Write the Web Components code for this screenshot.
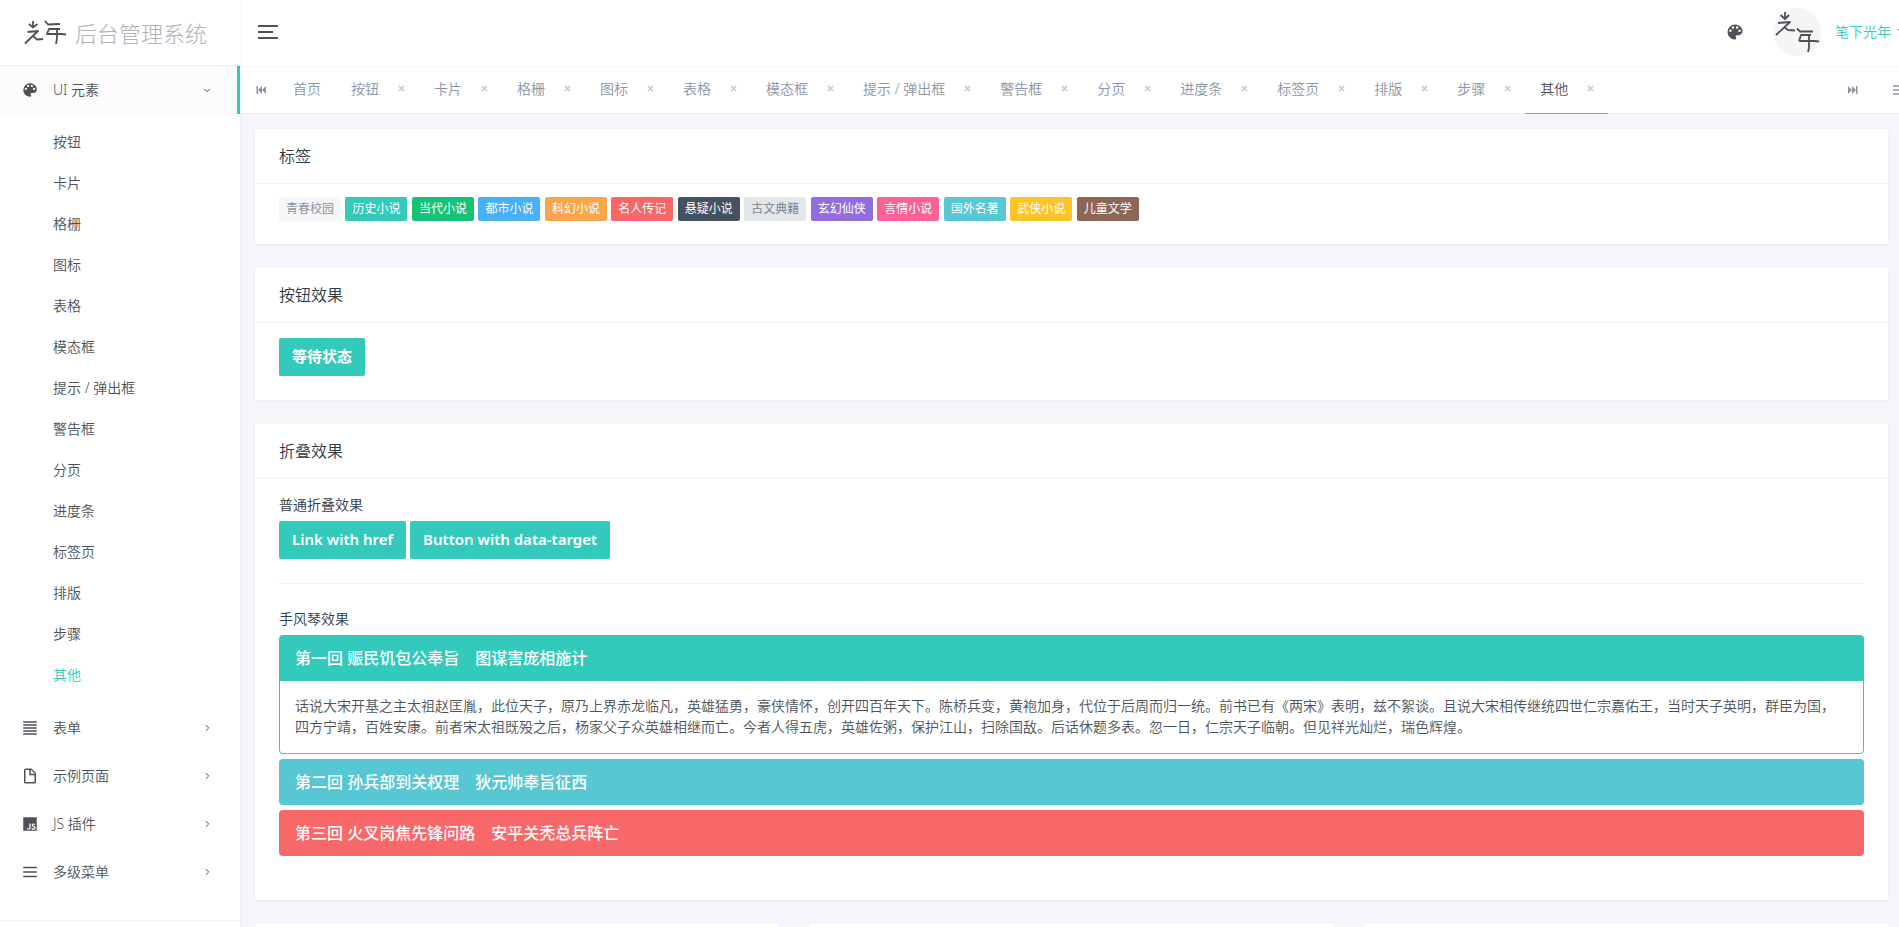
<!DOCTYPE html>
<html lang="zh-CN">
<head>
<meta charset="utf-8">
<title>光年后台管理系统 - 其他</title>
<style>
  html, body { margin: 0; height: 100%; }
  body {
    --primary: #33cabb;
    --text: #4d5259;
    --heading: #313944;
    --line: #f1f2f3;
    background: #f5f6fa;
    color: var(--text);
    font: 350 14px/21px "Noto Sans", "Noto Sans CJK SC", sans-serif;
    overflow: hidden;
  }
</style>
</head>
<body>
<lyear-app></lyear-app>

<script>
const define = (name, html, setup) => {
  const tpl = document.createElement('template');
  tpl.innerHTML = html;
  customElements.define(name, class extends HTMLElement {
    constructor() {
      super();
      this.attachShadow({ mode: 'open' }).append(tpl.content.cloneNode(true));
    }
    connectedCallback() { if (setup) setup(this, this.shadowRoot); }
  });
};

const ICONS = {
  palette: '<path fill="currentColor" d="M17.5 12a1.5 1.5 0 0 1-1.5-1.5A1.5 1.5 0 0 1 17.5 9a1.5 1.5 0 0 1 1.5 1.5 1.5 1.5 0 0 1-1.5 1.5m-3-4A1.5 1.5 0 0 1 13 6.5 1.5 1.5 0 0 1 14.5 5 1.5 1.5 0 0 1 16 6.5 1.5 1.5 0 0 1 14.5 8m-5 0A1.5 1.5 0 0 1 8 6.5 1.5 1.5 0 0 1 9.500 5 1.5 1.5 0 0 1 11 6.5 1.5 1.5 0 0 1 9.5 8m-3 4A1.5 1.5 0 0 1 5 10.5 1.5 1.5 0 0 1 6.5 9 1.5 1.5 0 0 1 8 10.5 1.5 1.5 0 0 1 6.5 12M12 3a9 9 0 0 0-9 9 9 9 0 0 0 9 9 1.5 1.5 0 0 0 1.5-1.5c0-.39-.15-.74-.39-1-.23-.27-.38-.62-.38-1a1.5 1.5 0 0 1 1.5-1.5H16a5 5 0 0 0 5-5c0-4.42-4.03-8-9-8z"/>',
  lines: '<path fill="currentColor" d="M3 3h18v2H3zm0 4h18v2H3zm0 4h18v2H3zm0 4h18v2H3zm0 4h18v2H3z"/>',
  file: '<path fill="currentColor" d="M13 9h5.5L13 3.500V9M6 2h8l6 6v12a2 2 0 0 1-2 2H6a2 2 0 0 1-2-2V4a2 2 0 0 1 2-2m5 2H6v16h12v-9h-7V4z"/>',
  js: '<path fill="currentColor" fill-rule="evenodd" d="M3 3h18v18H3V3m4.730 15.040c.4.850 1.190 1.550 2.540 1.550 1.500 0 2.530-.8 2.530-2.550v-5.780h-1.700V17c0 .860-.35 1.080-.9 1.080-.58 0-.82-.4-1.090-.87l-1.380.83m5.980-.18c.5.980 1.510 1.730 3.090 1.730 1.600 0 2.800-.83 2.800-2.360 0-1.410-.81-2.040-2.250-2.660l-.42-.18c-.73-.31-1.040-.52-1.040-1.020 0-.41.310-.73.810-.73.480 0 .8.210 1.090.73l1.310-.87c-.55-.96-1.330-1.330-2.400-1.330-1.510 0-2.480.960-2.480 2.230 0 1.380.81 2.030 2.030 2.550l.42.18c.78.340 1.240.55 1.240 1.130 0 .48-.45.83-1.150.83-.83 0-1.310-.43-1.670-1.030l-1.380.8z"/>',
  menu: '<path fill="currentColor" d="M3 5h18v2H3zm0 6h18v2H3zm0 6h18v2H3z"/>',
  right: '<path fill="none" stroke="currentColor" stroke-width="1.7" d="M10 7l5 5-5 5"/>',
  down: '<path fill="none" stroke="currentColor" stroke-width="1.7" d="M7 10l5 5 5-5"/>',
  first: '<path fill="currentColor" d="M3 4h3v16H3zM14 4v16l-8-8zM22 4v16l-8-8z"/>',
  last: '<path fill="currentColor" d="M18 4h3v16h-3zM10 4v16l8-8zM2 4v16l8-8z"/>',
  close: '<path fill="none" stroke="currentColor" stroke-width="3" d="M5 5l14 14M19 5L5 19"/>'
};

define('ly-icon', `
  <style>
    :host { display: inline-flex; flex: none; width: 18px; height: 18px; }
    svg { width: 100%; height: 100%; }
  </style>
  <svg viewBox="0 0 24 24" aria-hidden="true"></svg>`,
  (el, root) => { root.querySelector('svg').innerHTML = ICONS[el.getAttribute('name')]; });

define('ly-logo', `
  <style>
    :host { display: flex; align-items: center; height: 66px; padding-left: 23px; border-bottom: 1px solid #e9eaec; box-sizing: border-box; }
    a { display: flex; align-items: center; gap: 8px; color: #b0b2b4; text-decoration: none; font-size: 22px; line-height: 32px; font-weight: 300; }
    svg { width: 44px; height: 26px; color: #4d5259; }
  </style>
  <a href="#home">
    <svg viewBox="0 0 44 26" fill="none" stroke="currentColor" stroke-width="1.8" stroke-linejoin="round" aria-hidden="true">
      <path d="M10 1v6M6 4l4 3.500L14.500 4M4.500 12L15 11 2 23.500M10.500 16.500l3.500 3 6-.5"/>
      <path d="M22 1l3 3.500 12-.5M37 9H26l-2 5h15l4 .5M34 9v9l-1 6"/>
    </svg>
    <span>后台管理系统</span>
  </a>`);

define('ly-nav-item', `
  <style>
    :host { display: block; }
    a { display: flex; align-items: center; height: 48px; padding: 0 26px 0 21px; color: var(--text); text-decoration: none; box-sizing: border-box; }
    span { flex: 1; margin-left: 14px; padding-bottom: 2px; }
    .arrow { width: 14px; height: 14px; }
    :host([open]) a { background: #fcfcfc; border-right: 3px solid var(--primary); padding-right: 23px; }
  </style>
  <a href="#menu"><span><slot></slot></span></a>`,
  (el, root) => {
    const link = root.querySelector('a');
    link.insertAdjacentHTML('afterbegin', `<ly-icon name="${el.getAttribute('icon')}"></ly-icon>`);
    link.insertAdjacentHTML('beforeend', `<ly-icon class="arrow" name="${el.hasAttribute('open') ? 'down' : 'right'}"></ly-icon>`);
  });

define('ly-sub-item', `
  <style>
    :host { display: block; }
    a { display: block; padding: 9px 24px 11px 53px; color: var(--text); text-decoration: none; }
    :host([active]) a { color: var(--primary); }
  </style>
  <a href="#page"><slot></slot></a>`);

define('ly-sidebar', `
  <style>
    :host { display: flex; flex-direction: column; flex: none; width: 240px; background: #fff; box-shadow: 0 0 4px rgba(0,0,0,.08); z-index: 1; }
    .sub { padding: 8px 0; }
    .sub ly-sub-item { height: 41px; }
    .foot { margin-top: 24px; border-top: 1px solid var(--line); }
  </style>
  <ly-logo></ly-logo>
  <nav>
    <ly-nav-item icon="palette" open>UI 元素</ly-nav-item>
    <div class="sub"></div>
    <ly-nav-item icon="lines">表单</ly-nav-item>
    <ly-nav-item icon="file">示例页面</ly-nav-item>
    <ly-nav-item icon="js">JS 插件</ly-nav-item>
    <ly-nav-item icon="menu">多级菜单</ly-nav-item>
  </nav>
  <div class="foot"></div>`,
  (el, root) => {
    const pages = ['按钮','卡片','格栅','图标','表格','模态框','提示 / 弹出框','警告框','分页','进度条','标签页','排版','步骤','其他'];
    root.querySelector('.sub').innerHTML = pages.map(p => `<ly-sub-item${p === '其他' ? ' active' : ''}>${p}</ly-sub-item>`).join('');
  });

define('ly-header', `
  <style>
    :host { display: flex; align-items: center; height: 64px; padding: 0 0 2px 18px; background: #fff; border-bottom: 1px solid #f8f8f9; overflow: hidden; }
    button { border: 0; background: none; padding: 0; color: var(--text); display: flex; }
    .burger { flex-direction: column; gap: 4px; margin-right: auto; }
    .burger i { display: block; width: 20px; height: 2px; background: var(--text); }
    .burger i:nth-child(2) { width: 15px; }
    .skin { margin-right: 28px; }
    .skin ly-icon { width: 20px; height: 20px; }
    .user { display: flex; flex: none; align-items: center; gap: 14px; color: var(--primary); text-decoration: none; }
    .avatar { width: 48px; height: 48px; border-radius: 50%; background: #f5f5f5; color: var(--text); overflow: visible; }
    .name { display: flex; align-items: center; gap: 6px; margin-right: -6px; padding-bottom: 2px; }
    .caret { border: 4px solid transparent; border-top-color: currentColor; border-bottom: 0; }
  </style>
  <button class="burger" aria-label="切换侧栏"><i></i><i></i><i></i></button>
  <button class="skin" aria-label="主题"><ly-icon name="palette"></ly-icon></button>
  <a class="user" href="#user">
    <svg class="avatar" viewBox="0 0 48 48" fill="none" stroke="currentColor" stroke-width="1.8" stroke-linejoin="round" aria-hidden="true">
      <path d="M12 4v7M7.500 7l4.500 4 4-4M5 15l12-1L3 27M11 19l4 3 7 .5"/>
      <path d="M24 20.500l3 3h13M38 27H28l-2 6M26 33h15l5 .5M36 27v13l-1 4"/>
    </svg>
    <span class="name">笔下光年 <i class="caret"></i></span>
  </a>`);

define('ly-tab', `
  <style>
    :host { display: flex; flex: none; box-sizing: border-box; align-items: center; height: 47px; padding: 0 12px 2px 15px; color: #8b95a5; border-bottom: 1px solid transparent; }
    :host([fixed]) { padding-right: 15px; }
    :host([active]) { color: var(--text); border-bottom-color: var(--primary); }
    a { color: inherit; text-decoration: none; }
    button { display: flex; width: 12px; height: 12px; padding: 0; border: 0; background: none; color: #b5bac2; margin-left: 16px; align-items: center; justify-content: center; }
    ly-icon { width: 9px; height: 9px; }
    :host([fixed]) button { display: none; }
  </style>
  <a href="#tab"><slot></slot></a><button aria-label="关闭"><ly-icon name="close"></ly-icon></button>`);

define('ly-tabs', `
  <style>
    :host { display: flex; align-items: center; height: 46px; background: #fff; border-bottom: 1px solid #ebedf0; }
    button { display: flex; flex: none; justify-content: center; border: 0; padding: 0; background: none; color: #8b95a5; }
    button.first { width: 38px; padding-left: 4px; }
    button.last { width: 44px; }
    ly-icon { width: 12px; height: 12px; }
    .list { display: flex; flex: 1; min-width: 0; }
    .clip { width: 24px; overflow: hidden; justify-content: flex-end; flex: none; display: flex; }
    .more { width: 8px; overflow: hidden; justify-content: flex-start; }
    .more ly-icon { width: 16px; height: 16px; }
  </style>
  <button class="first" aria-label="向左"><ly-icon name="first"></ly-icon></button>
  <div class="list"></div>
  <button class="last" aria-label="向右"><ly-icon name="last"></ly-icon></button>
  <div class="clip"><button class="more" aria-label="更多"><ly-icon name="menu"></ly-icon></button></div>`,
  (el, root) => {
    const tabs = ['首页','按钮','卡片','格栅','图标','表格','模态框','提示 / 弹出框','警告框','分页','进度条','标签页','排版','步骤','其他'];
    root.querySelector('.list').innerHTML = tabs.map((t, i) =>
      `<ly-tab${i === 0 ? ' fixed' : ''}${t === '其他' ? ' active' : ''}>${t}</ly-tab>`).join('');
  });

define('ly-card', `
  <style>
    :host { display: block; background: #fff; box-shadow: 0 1px 3px rgba(0,0,0,.06); margin-bottom: 24px; }
    header { padding: 15px 24px; border-bottom: 1px solid var(--line); color: var(--heading); font-size: 16px; line-height: 24px; }
    h4 { margin: 0; font: inherit; }
    .body { padding: 15px 24px 24px; }
    :host([dense]) .body { padding: 13px 24px 23px; }
  </style>
  <header><h4><slot name="title"></slot></h4></header>
  <div class="body"><slot></slot></div>`);

define('ly-label', `
  <style>
    :host { display: inline-block; padding: 0 7px; height: 24px; font: 400 12px/24px "Noto Sans", "Noto Sans CJK SC", sans-serif; border-radius: 2px; color: #fff; vertical-align: top; }
    :host([tone="light"]) { background: #f5f6f7; color: #8b95a5; }
    :host([tone="primary"]) { background: #33cabb; }
    :host([tone="success"]) { background: #15c377; }
    :host([tone="info"]) { background: #48b0f7; }
    :host([tone="warning"]) { background: #faa64b; }
    :host([tone="danger"]) { background: #f96868; }
    :host([tone="dark"]) { background: #465161; }
    :host([tone="secondary"]) { background: #e4e7ea; color: #7b838d; }
    :host([tone="purple"]) { background: #926dde; }
    :host([tone="pink"]) { background: #f96197; }
    :host([tone="cyan"]) { background: #57c7d4; }
    :host([tone="yellow"]) { background: #fcc525; }
    :host([tone="brown"]) { background: #8d6658; }
  </style>
  <slot></slot>`);

define('ly-button', `
  <style>
    :host { display: block; }
    a, button { display: block; box-sizing: border-box; height: 38px; margin: 0; padding: 0 13px; border: 0; border-radius: 2px; background: var(--primary); color: #fff; font: 600 15px/36px "Noto Sans", "Noto Sans CJK SC", sans-serif; text-decoration: none; white-space: nowrap; }
    button { padding-bottom: 2px; }
  </style>
  <button type="button"><slot></slot></button>`,
  (el, root) => {
    if (!el.hasAttribute('href')) return;
    const link = document.createElement('a');
    link.href = el.getAttribute('href');
    link.append(document.createElement('slot'));
    root.querySelector('button').replaceWith(link);
  });

define('ly-panel', `
  <style>
    :host { --tone: var(--primary); display: block; border-radius: 4px; overflow: hidden; }
    :host([tone="cyan"]) { --tone: #57c7d4; }
    :host([tone="danger"]) { --tone: #f96868; }
    h4 { margin: 0; }
    button { display: block; width: 100%; height: 46px; padding: 0 16px; border: 0; background: var(--tone); color: #fff; text-align: left; font: 500 16px/46px "Noto Sans", "Noto Sans CJK SC", sans-serif; }
    .body { display: none; padding: 14px 15px 16px; border: 1px solid var(--tone); border-top: 0; border-radius: 0 0 4px 4px; }
    :host([open]) .body { display: block; }
  </style>
  <h4><button type="button"><slot name="title"></slot></button></h4>
  <div class="body"><slot></slot></div>`);

define('lyear-app', `
  <style>
    :host { display: flex; height: 100vh; overflow: hidden; }
    main { flex: 1; min-width: 0; }
    .content { padding: 15px 11px 0 15px; }
    .labels { font-family: "Liberation Sans", sans-serif; font-size: 16px; line-height: 24px; }
    .sub { margin: 0; font-size: 14px; line-height: 21px; font-weight: inherit; color: var(--heading); }
    .row { display: flex; gap: 4px; }
    .sub + .row { margin-top: 6px; }
    hr { border: 0; border-top: 1px solid var(--line); margin: 24px 0; }
    .stack { display: grid; gap: 5px; margin: 6px 0 20px; }
    p { margin: 0; }
    .cols { display: grid; grid-template-columns: repeat(3, 1fr); gap: 30px; }
  </style>
  <ly-sidebar></ly-sidebar>
  <main>
    <ly-header></ly-header>
    <ly-tabs></ly-tabs>
    <div class="content">
      <ly-card dense>
        <span slot="title">标签</span>
        <div class="labels">
          <ly-label tone="light">青春校园</ly-label>
          <ly-label tone="primary">历史小说</ly-label>
          <ly-label tone="success">当代小说</ly-label>
          <ly-label tone="info">都市小说</ly-label>
          <ly-label tone="warning">科幻小说</ly-label>
          <ly-label tone="danger">名人传记</ly-label>
          <ly-label tone="dark">悬疑小说</ly-label>
          <ly-label tone="secondary">古文典籍</ly-label>
          <ly-label tone="purple">玄幻仙侠</ly-label>
          <ly-label tone="pink">言情小说</ly-label>
          <ly-label tone="cyan">国外名著</ly-label>
          <ly-label tone="yellow">武侠小说</ly-label>
          <ly-label tone="brown">儿童文学</ly-label>
        </div>
      </ly-card>
      <ly-card>
        <span slot="title">按钮效果</span>
        <div class="row"><ly-button>等待状态</ly-button></div>
      </ly-card>
      <ly-card>
        <span slot="title">折叠效果</span>
        <h5 class="sub">普通折叠效果</h5>
        <div class="row">
          <ly-button href="#collapse">Link with href</ly-button>
          <ly-button>Button with data-target</ly-button>
        </div>
        <hr>
        <h5 class="sub">手风琴效果</h5>
        <div class="stack">
          <ly-panel open>
            <span slot="title">第一回 赈民饥包公奉旨　图谋害庞相施计</span>
            <p>话说大宋开基之主太祖赵匡胤，此位天子，原乃上界赤龙临凡，英雄猛勇，豪侠情怀，创开四百年天下。陈桥兵变，黄袍加身，代位于后周而归一统。前书已有《两宋》表明，兹不絮谈。且说大宋相传继统四世仁宗嘉佑王，当时天子英明，群臣为国，四方宁靖，百姓安康。前者宋太祖既殁之后，杨家父子众英雄相继而亡。今者人得五虎，英雄佐粥，保护江山，扫除国敌。后话休题多表。忽一日，仁宗天子临朝。但见祥光灿烂，瑞色辉煌。</p>
          </ly-panel>
          <ly-panel tone="cyan"><span slot="title">第二回 孙兵部到关权理　狄元帅奉旨征西</span></ly-panel>
          <ly-panel tone="danger"><span slot="title">第三回 火叉岗焦先锋问路　安平关秃总兵阵亡</span></ly-panel>
        </div>
      </ly-card>
      <div class="cols"><ly-card></ly-card><ly-card></ly-card><ly-card></ly-card></div>
    </div>
  </main>`);
</script>
</body>
</html>
